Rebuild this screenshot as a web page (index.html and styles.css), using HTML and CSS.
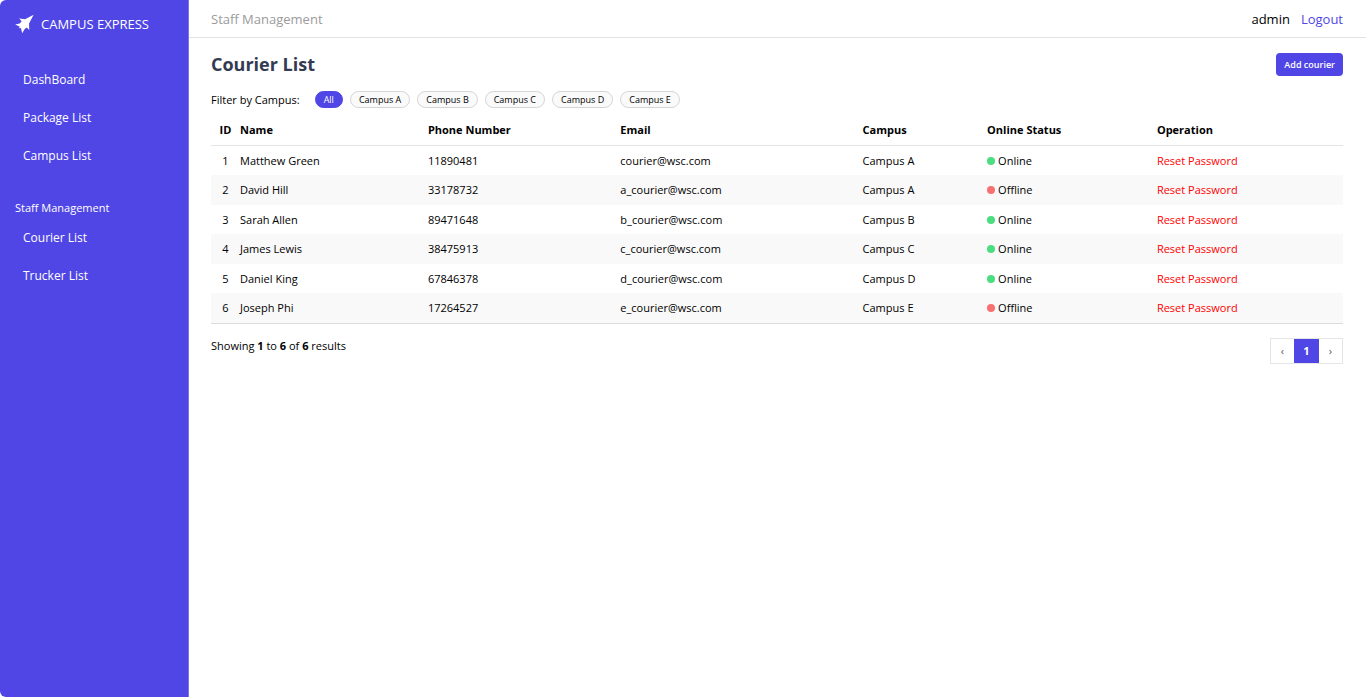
FILE: index.html
```
<!DOCTYPE html>
<html lang="en">
<head>
<meta charset="utf-8">
<title>Campus Express - Courier List</title>
<meta name="viewport" content="width=device-width, initial-scale=1">
<link rel="stylesheet" href="styles.css">
</head>
<body>
<div class="app">
  <aside class="sidebar">
    <div class="brand">
      <svg class="brand-icon" viewBox="0 0 20 20" aria-hidden="true"><path d="M19.6 0.2 L10.6 5 L4.4 4.2 L7 7.2 L5 9.6 L0.2 10.6 L5.2 12.8 L3.8 14.4 L6.2 14.2 L7.6 19.8 L10.2 15.2 L12.4 13.6 L15 16.4 L14.8 9.6 Z"/></svg>
      <span>CAMPUS EXPRESS</span>
    </div>
    <nav>
      <ul class="menu">
        <li><a href="#">DashBoard</a></li>
        <li><a href="#">Package List</a></li>
        <li><a href="#">Campus List</a></li>
      </ul>
      <h2 class="menu-title">Staff Management</h2>
      <ul class="menu">
        <li><a href="#">Courier List</a></li>
        <li><a href="#">Trucker List</a></li>
      </ul>
    </nav>
  </aside>
  <div class="main">
    <header class="topbar">
      <span class="section">Staff Management</span>
      <div class="account"><span>admin</span><a href="#">Logout</a></div>
    </header>
    <main class="content">
      <div class="heading">
        <h1>Courier List</h1>
        <button class="add" type="button">Add courier</button>
      </div>
      <div class="filters">
        <span class="filter-label">Filter by Campus:</span>
        <button class="pill active" type="button">All</button>
        <button class="pill" type="button">Campus A</button>
        <button class="pill" type="button">Campus B</button>
        <button class="pill" type="button">Campus C</button>
        <button class="pill" type="button">Campus D</button>
        <button class="pill" type="button">Campus E</button>
      </div>
      <table class="couriers">
        <thead>
          <tr><th class="id">ID</th><th class="name">Name</th><th class="phone">Phone Number</th><th class="email">Email</th><th class="campus">Campus</th><th class="status">Online Status</th><th>Operation</th></tr>
        </thead>
        <tbody>
          <tr><td class="id">1</td><td>Matthew Green</td><td>11890481</td><td>courier@wsc.com</td><td>Campus A</td><td><span class="state online">Online</span></td><td><a href="#">Reset Password</a></td></tr>
          <tr><td class="id">2</td><td>David Hill</td><td>33178732</td><td>a_courier@wsc.com</td><td>Campus A</td><td><span class="state offline">Offline</span></td><td><a href="#">Reset Password</a></td></tr>
          <tr><td class="id">3</td><td>Sarah Allen</td><td>89471648</td><td>b_courier@wsc.com</td><td>Campus B</td><td><span class="state online">Online</span></td><td><a href="#">Reset Password</a></td></tr>
          <tr><td class="id">4</td><td>James Lewis</td><td>38475913</td><td>c_courier@wsc.com</td><td>Campus C</td><td><span class="state online">Online</span></td><td><a href="#">Reset Password</a></td></tr>
          <tr><td class="id">5</td><td>Daniel King</td><td>67846378</td><td>d_courier@wsc.com</td><td>Campus D</td><td><span class="state online">Online</span></td><td><a href="#">Reset Password</a></td></tr>
          <tr><td class="id">6</td><td>Joseph Phi</td><td>17264527</td><td>e_courier@wsc.com</td><td>Campus E</td><td><span class="state offline">Offline</span></td><td><a href="#">Reset Password</a></td></tr>
        </tbody>
      </table>
      <div class="footer">
        <p>Showing <b>1</b> to <b>6</b> of <b>6</b> results</p>
        <div class="pager">
          <button type="button" aria-label="Previous page">‹</button>
          <button class="current" type="button">1</button>
          <button type="button" aria-label="Next page">›</button>
        </div>
      </div>
    </main>
  </div>
</div>
</body>
</html>
```
FILE: styles.css
```
* { box-sizing: border-box; }
body {
  margin: 0;
  font: 11px/16px "Segoe UI", "Open Sans", "Noto Sans", sans-serif;
  color: #000;
  background: #fff;
}
a { text-decoration: none; }
h1, h2, p, ul { margin: 0; padding: 0; }
button { font: inherit; cursor: pointer; }
.app { display: flex; min-height: 100vh; }
.sidebar {
  flex: 0 0 189px;
  background: #4f46e5;
  border-right: 1px solid #7c75ec;
  border-radius: 6px 0 0 6px;
  color: #fff;
}
.brand {
  display: flex;
  align-items: center;
  gap: 7px;
  padding: 14px 15px 0;
  font-size: 13px;
  line-height: 20px;
}
.brand-icon { width: 19px; height: 20px; fill: #fff; }
.menu { list-style: none; }
.brand + nav { padding-top: 27px; }
.menu a {
  display: block;
  padding: 9px 23px;
  font-size: 12px;
  line-height: 20px;
  color: inherit;
}
.menu-title {
  padding: 25px 15px 3px;
  font-size: 11px;
  line-height: 16px;
  font-weight: 400;
}
.main { flex: 1; min-width: 0; }
.topbar {
  display: flex;
  justify-content: space-between;
  align-items: center;
  height: 38px;
  padding: 0 23px 0 22px;
  border-bottom: 1px solid #e2e2e4;
  font-size: 13px;
}
.section { color: #9b9b9b; }
.account { display: flex; gap: 11px; }
.account a { color: #4f46e5; }
.content { padding: 14px 23px 0 22px; }
.heading { display: flex; justify-content: space-between; align-items: center; }
h1 { font-size: 18px; line-height: 25px; font-weight: 700; color: #333b52; }
.add {
  height: 23px;
  padding: 0 8px;
  border: 0;
  border-radius: 4px;
  background: #4f46e5;
  color: #fff;
  font-size: 9px;
  font-weight: 600;
}
.filters { display: flex; align-items: center; gap: 7px; margin-top: 14px; }
.filter-label { margin-right: 8px; }
.pill {
  height: 17px;
  padding: 0 8px;
  border: 1px solid #d4d4d4;
  border-radius: 9px;
  background: #fafafa;
  color: #000;
  font-size: 9px;
  font-weight: 500;
  line-height: 15px;
}
.pill.active { border-color: #4f46e5; background: #4f46e5; color: #fff; }
.couriers {
  width: 100%;
  margin-top: 7px;
  table-layout: fixed;
  border-collapse: separate;
  border-spacing: 0;
  border-bottom: 1px solid #dcdcdc;
}
th, td { padding: 0 4px; text-align: left; }
th { height: 31px; font-weight: 700; color: #000; border-bottom: 1px solid #e5e5e5; }
td { height: 29px; }
tbody tr:nth-child(even) { background: #f9f9f9; }
tbody tr:nth-child(even) td { height: 30px; }
.couriers .id { width: 25px; padding: 0 0 0 4px; text-align: center; }
.name { width: 16.6%; }
.phone { width: 17%; }
.email { width: 21.4%; }
.campus { width: 11%; }
.status { width: 15%; }
td a { color: #f00; }
.state { display: flex; align-items: center; gap: 3px; }
.state::before { content: ""; width: 8px; height: 8px; border-radius: 50%; background: #4ade80; }
.state.offline::before { background: #f87171; }
.footer { display: flex; justify-content: space-between; margin-top: 14px; }
.pager { display: flex; border: 1px solid #e5e5e5; }
.pager button {
  width: 23px;
  height: 24px;
  padding: 0;
  border: 0;
  background: #fff;
  color: #555;
}
.pager .current { width: 25px; background: #4f46e5; color: #fff; font-weight: 700; }
```
